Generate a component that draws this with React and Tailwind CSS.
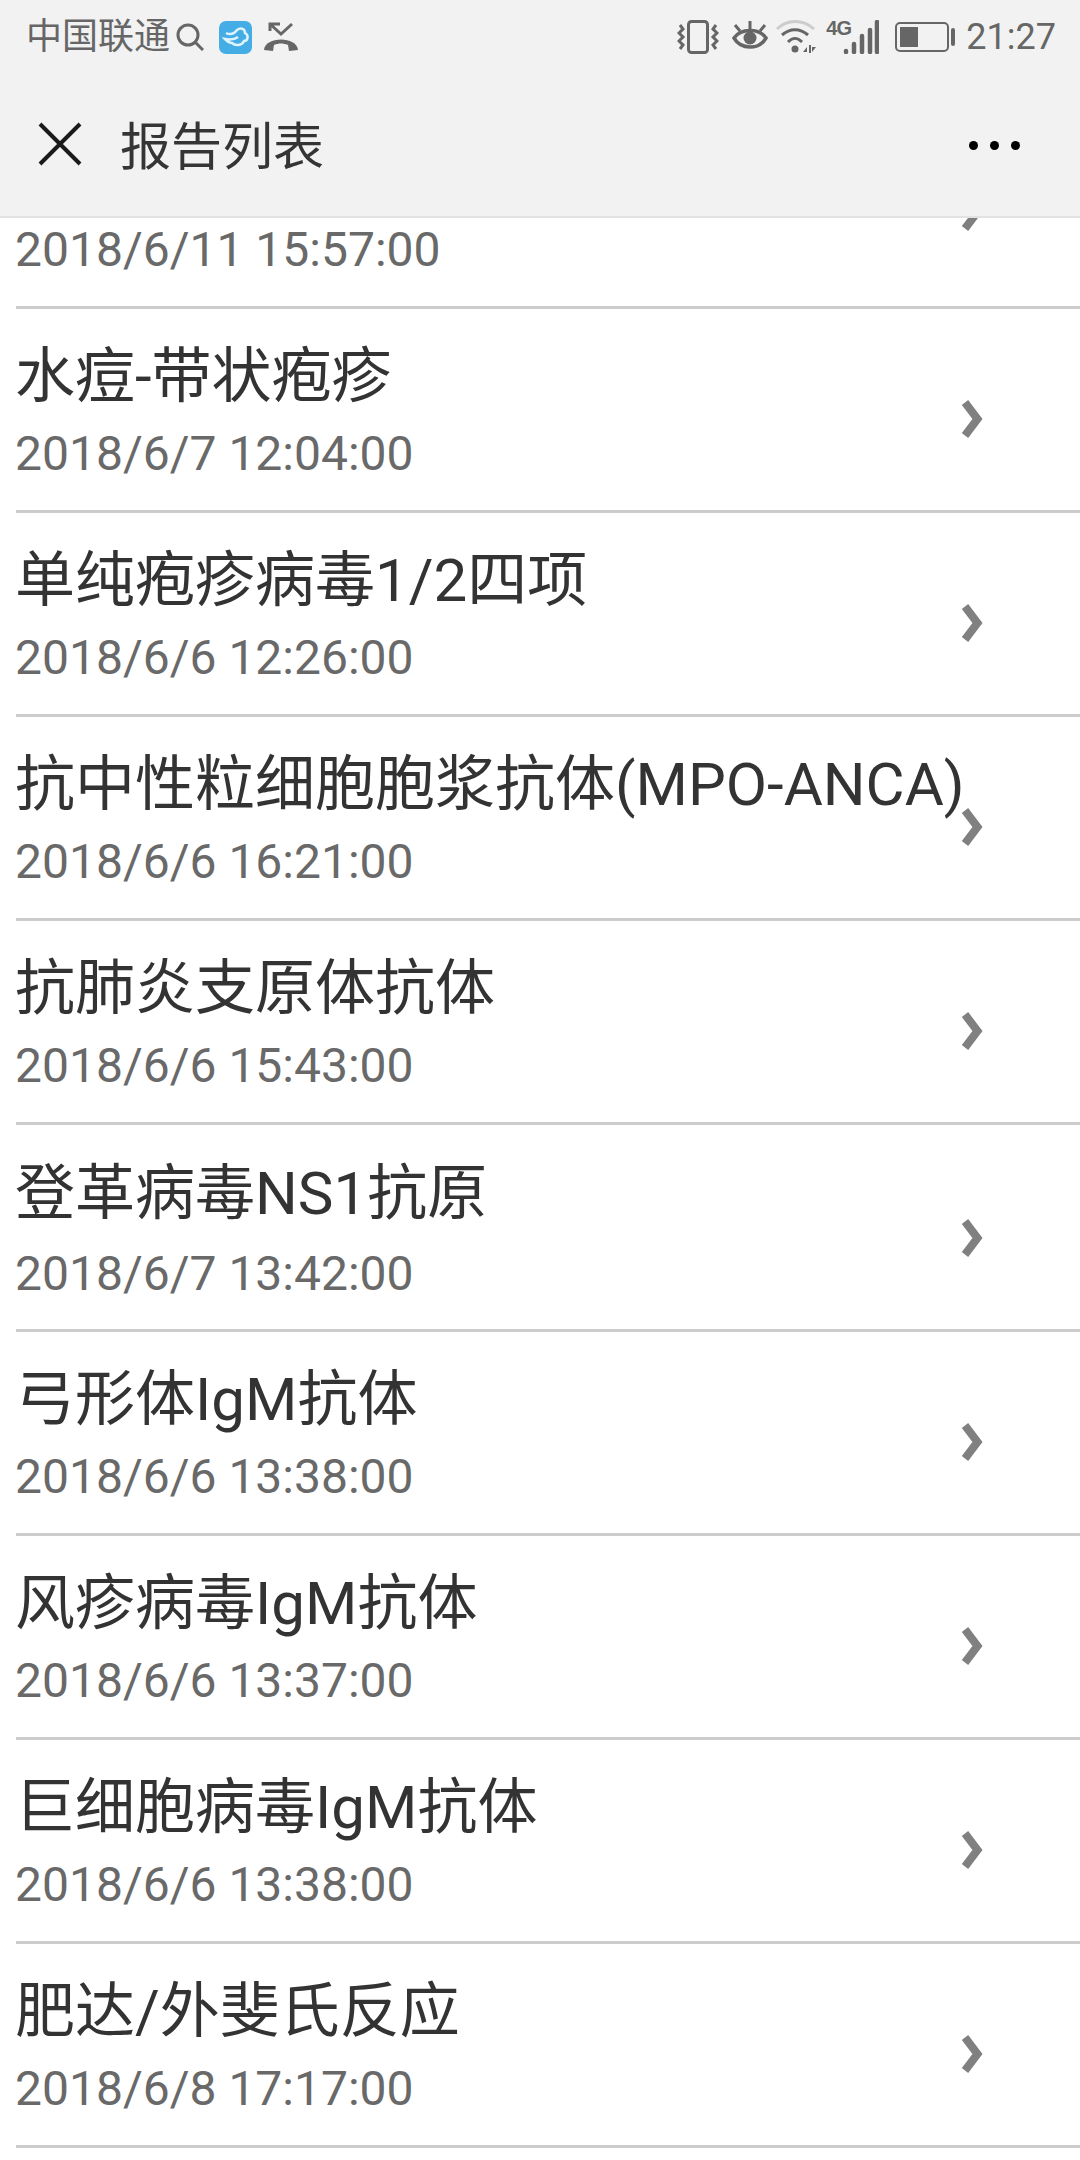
const reports = [
  { name: '水痘-带状疱疹', date: '2018/6/7 12:04:00' },
  { name: '单纯疱疹病毒1/2四项', date: '2018/6/6 12:26:00' },
  { name: '抗中性粒细胞胞浆抗体(MPO-ANCA)', date: '2018/6/6 16:21:00' },
  { name: '抗肺炎支原体抗体', date: '2018/6/6 15:43:00' },
  { name: '登革病毒NS1抗原', date: '2018/6/7 13:42:00', tall: true },
  { name: '弓形体IgM抗体', date: '2018/6/6 13:38:00' },
  { name: '风疹病毒IgM抗体', date: '2018/6/6 13:37:00' },
  { name: '巨细胞病毒IgM抗体', date: '2018/6/6 13:38:00' },
  { name: '肥达/外斐氏反应', date: '2018/6/8 17:17:00' },
];

const Chevron = ({ className }) => (
  <svg width="22" height="40" viewBox="0 0 22 40" className={`shrink-0 ${className}`}>
    <path d="M4 3.5 L16.5 20 L4 36.5" fill="none" stroke="#808080" strokeWidth="8" />
  </svg>
);

const StatusIcons = () => (
  <div className="flex items-center">
    <svg width="42" height="34" viewBox="0 0 42 34" className="mr-[13px]">
      <rect x="11.5" y="1.5" width="19" height="31" rx="3" fill="none" stroke="#666" strokeWidth="3" />
      <path d="M3 5 L6 9 L2 13 L6 17 L2 21 L6 25 L3 29 M39 5 L36 9 L40 13 L36 17 L40 21 L36 25 L39 29" fill="none" stroke="#666" strokeWidth="3" />
    </svg>
    <svg width="36" height="32" viewBox="0 0 36 32" className="mr-[8px]">
      <path d="M2 17 C9 7 27 7 34 17 C27 29 9 29 2 17 Z" fill="none" stroke="#666" strokeWidth="3.5" />
      <circle cx="18" cy="17" r="6.5" fill="#666" />
      <path d="M18 8 V0 M8 10 L3 4 M28 10 L33 4" stroke="#666" strokeWidth="3" />
    </svg>
    <svg width="40" height="34" viewBox="0 0 40 34" className="mr-[10px]">
      <path d="M1 9 C11 -1 27 -1 38 9" fill="none" stroke="#ccc" strokeWidth="3" />
      <path d="M6 15 C14 8 24 8 32 15 M12 22 C17 17 21 17 26 22" fill="none" stroke="#666" strokeWidth="3" />
      <circle cx="19" cy="29" r="3.5" fill="#666" />
      <path d="M27 32 L31 27 V32 Z M33 25 H35 V33 H33 Z M36 27 L40 27 L36 32 Z" fill="#666" />
    </svg>
    <div className="relative w-[53px] h-[34px] mr-[16px]">
      <span className="absolute left-0 -top-[1px] text-[20px] leading-[18px] font-bold tracking-tighter text-[#666] font-['Liberation_Sans',sans-serif]">4G</span>
      <svg width="53" height="34" viewBox="0 0 53 34">
        <path d="M20 31 V32 M28 24 V32 M36 16 V32 M44 10 V32 M51 2 V32" stroke="#666" strokeWidth="4.5" strokeLinecap="round" />
      </svg>
    </div>
    <svg width="60" height="30" viewBox="0 0 60 30" className="mr-[11px]">
      <rect x="1" y="1" width="52" height="28" rx="4" fill="none" stroke="#666" strokeWidth="2" />
      <rect x="5" y="5" width="18" height="20" fill="#666" />
      <rect x="56" y="6" width="4" height="18" rx="2" fill="#666" />
    </svg>
  </div>
);

const ReportRow = ({ report }) => (
  <div className={`flex items-center ml-4 pr-[97px] border-b-[3px] border-[#cccccc] ${report.tall ? 'h-[207px]' : 'h-[204px]'}`}>
    <div className={`flex-1 min-w-0 whitespace-nowrap -ml-px ${report.tall ? 'pt-[5px]' : 'pt-[3px]'}`}>
      <div className="text-[60px] leading-[72px] text-[#333333]">{report.name}</div>
      <div className={`text-[48px] leading-[56px] text-[#696969] ${report.tall ? 'mt-[16px]' : 'mt-[13px]'}`}>{report.date}</div>
    </div>
    <Chevron className={report.tall ? 'mt-[22px]' : 'mt-[18px]'} />
  </div>
);

export default function App() {
  return (
    <div className="w-[1080px] h-[2160px] overflow-hidden bg-white flex flex-col font-['Roboto','Noto_Sans_CJK_SC',sans-serif]">
      <div className="bg-[#f2f2f2] border-b-2 border-[#e2e2e2] h-[218px] shrink-0">
        <div className="h-[74px] flex items-center justify-between pl-[26px] pr-[24px] text-[#666666]">
          <div className="flex items-center">
            <span className="text-[36px] leading-[40px]">中国联通</span>
            <svg width="28" height="28" viewBox="0 0 28 28" className="ml-[6px]">
              <circle cx="12" cy="12" r="10" fill="none" stroke="#666" strokeWidth="3" />
              <path d="M19 19 L27 27" stroke="#666" strokeWidth="3" />
            </svg>
            <div className="ml-[15px] w-[33px] h-[33px] rounded-[7px] bg-[#45ade6] flex items-center justify-center">
              <svg width="28" height="22" viewBox="0 0 28 22">
                <path d="M4 7 C8 9 12 8 15 4 C19 1 23 3 23 7 C27 9 26 15 22 15 C20 20 13 20 10 17 C8 17 6 16 3 13 C8 14 12 14 16 11" fill="none" stroke="#dff3fc" strokeWidth="2.5" />
              </svg>
            </div>
            <svg width="34" height="30" viewBox="0 0 34 30" className="ml-[12px]">
              <path d="M16 2 H6 V9 M6 2 L17 12 L28 2" fill="none" stroke="#666" strokeWidth="3" />
              <path d="M0 28 C1 14 33 14 34 28 L25 29 L24 23 C19 21 15 21 10 23 L9 29 Z" fill="#666" />
            </svg>
          </div>
          <div className="flex items-center">
            <StatusIcons />
            <span className="text-[36px] leading-[40px]">21:27</span>
          </div>
        </div>
        <div className="h-[142px] flex items-center pl-[38px] pr-[60px] pt-[6px]">
          <svg width="44" height="44" viewBox="0 0 44 44" className="shrink-0 mb-[8px]">
            <path d="M2 2 L42 42 M42 2 L2 42" stroke="#1a1a1a" strokeWidth="4" />
          </svg>
          <span className="ml-[38px] text-[51px] leading-[60px] text-[#353535]">报告列表</span>
          <div className="ml-auto flex items-center gap-[12px] mb-[6px]">
            <span className="w-[9px] h-[9px] rounded-full bg-black" />
            <span className="w-[9px] h-[9px] rounded-full bg-black" />
            <span className="w-[9px] h-[9px] rounded-full bg-black" />
          </div>
        </div>
      </div>
      <div className="flex-1 overflow-hidden">
        <div className="flex items-center ml-4 pr-[97px] border-b-[3px] border-[#cccccc] h-[204px] -mt-[113px]">
          <div className="flex-1 min-w-0 whitespace-nowrap -ml-px pt-[3px]">
            <div className="h-[72px]" />
            <div className="text-[48px] leading-[56px] mt-[13px] text-[#696969]">2018/6/11 15:57:00</div>
          </div>
          <Chevron className="mt-[12px]" />
        </div>
        {reports.map((report) => (
          <ReportRow key={report.name} report={report} />
        ))}
      </div>
    </div>
  );
}
